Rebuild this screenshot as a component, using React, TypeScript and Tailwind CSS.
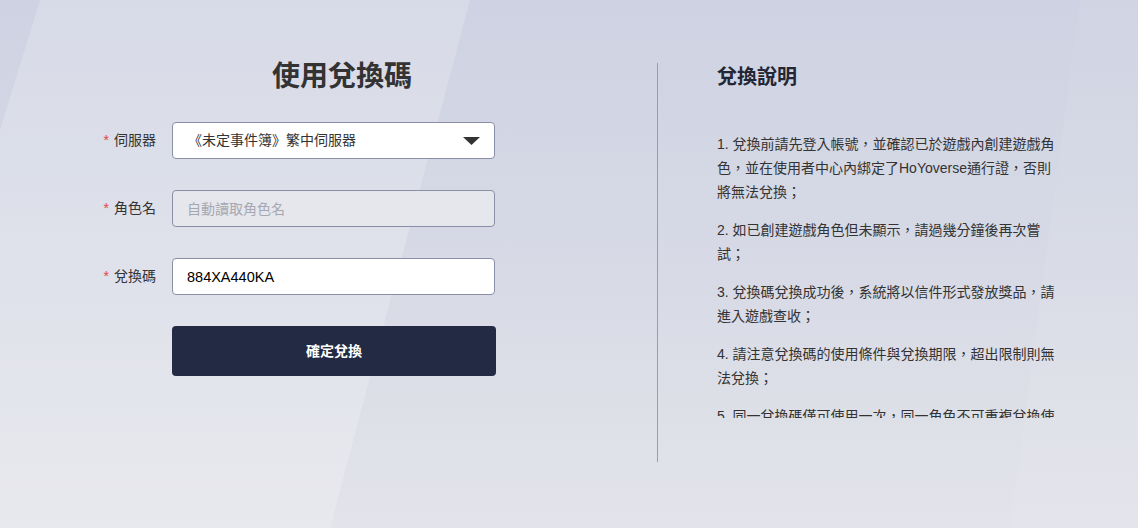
import { useState } from 'react';

const RULES: string[][] = [
  ['1. 兌換前請先登入帳號，並確認已於遊戲內創建遊戲角', '色，並在使用者中心內綁定了HoYoverse通行證，否則', '將無法兌換；'],
  ['2. 如已創建遊戲角色但未顯示，請過幾分鐘後再次嘗', '試；'],
  ['3. 兌換碼兌換成功後，系統將以信件形式發放獎品，請', '進入遊戲查收；'],
  ['4. 請注意兌換碼的使用條件與兌換期限，超出限制則無', '法兌換；'],
  ['5. 同一兌換碼僅可使用一次，同一角色不可重複兌換使', '用；'],
  ['6. 如有其他疑問，請聯繫遊戲內客服。'],
];

// la coma de ancho completo ocupa toda la celda
function Line({ text }: { text: string }) {
  const parts = text.split('，');
  return (
    <>
      {parts.map((p, i) => (
        <span key={i}>
          {p}
          {i < parts.length - 1 && <span className="inline-block w-[14px]">，</span>}
        </span>
      ))}
    </>
  );
}

function Field({ label, children }: { label: string; children: React.ReactNode }) {
  return (
    <div className="flex items-center gap-4">
      <label className="w-[66px] text-right text-[14px] text-[#333]">
        <span className="text-[#e4453a] mr-[5px]">*</span>
        {label}
      </label>
      {children}
    </div>
  );
}

export default function App() {
  const [code, setCode] = useState('884XA440KA');

  return (
    <div
      lang="zh-Hant"
      className="relative h-[528px] w-full overflow-hidden bg-[linear-gradient(180deg,#ced2e2_0%,#d8dbe6_55%,#e3e4ea_100%)]"
      style={{ fontFamily: '"Liberation Sans", "Noto Sans CJK TC", sans-serif' }}
    >
      {/* franja diagonal clara */}
      <div className="absolute inset-0 bg-white/20 [clip-path:polygon(40px_0,470px_0,330px_100%,0_100%,0_130px)]" />
      <div className="absolute inset-0 bg-white/5 [clip-path:polygon(1080px_0,1138px_0,1138px_100%,1010px_100%)]" />

      <div className="relative flex">
        {/* Formulario */}
        <section className="w-[657px] pl-[90px] pt-[57px]">
          <h1 className="ml-[182px] text-[28px] leading-[40px] font-bold text-[#333]">使用兌換碼</h1>
          <div className="mt-[25px] flex flex-col gap-[31px]">
            <Field label="伺服器">
              <div className="flex h-[37px] w-[323px] items-center justify-between rounded-[4px] border border-[#8a8ea6] bg-white pl-[15px] pr-[14px] text-[14px] text-[#333]">
                <span>《未定事件簿》繁中伺服器</span>
                <svg width="17" height="8" viewBox="0 0 17 8">
                  <path d="M0 0 H17 L8.5 8 Z" fill="#333" />
                </svg>
              </div>
            </Field>
            <Field label="角色名">
              <input
                disabled
                placeholder="自動讀取角色名"
                className="h-[37px] w-[323px] rounded-[4px] border border-[#8a8ea6] bg-[#e6e7ed] px-[14px] text-[14px] placeholder:text-[#a5a7b1] outline-none"
              />
            </Field>
            <Field label="兌換碼">
              <input
                value={code}
                onChange={e => setCode(e.target.value)}
                className="h-[37px] w-[323px] rounded-[4px] border border-[#8a8ea6] bg-white px-[14px] text-[14.5px] text-black outline-none"
              />
            </Field>
            <button className="ml-[82px] h-[50px] w-[324px] rounded-[4px] bg-[#232a44] text-[14px] font-bold text-white">
              確定兌換
            </button>
          </div>
        </section>

        {/* Explicación */}
        <section className="mt-[63px] h-[399px] border-l border-[#9a9dab] pl-[59px]">
          <h2 className="text-[20px] leading-[28px] font-bold text-[#232634]">兌換說明</h2>
          <div className="mt-[41px] h-[286px] w-[345px] overflow-hidden text-[14px] leading-[24px] text-[#333]">
            {RULES.map((lines, i) => (
              <p key={i} className="mb-[14px] whitespace-nowrap">
                {lines.map((l, j) => (
                  <span key={j}>
                    <Line text={l} />
                    {j < lines.length - 1 && <br />}
                  </span>
                ))}
              </p>
            ))}
          </div>
        </section>
      </div>
    </div>
  );
}
